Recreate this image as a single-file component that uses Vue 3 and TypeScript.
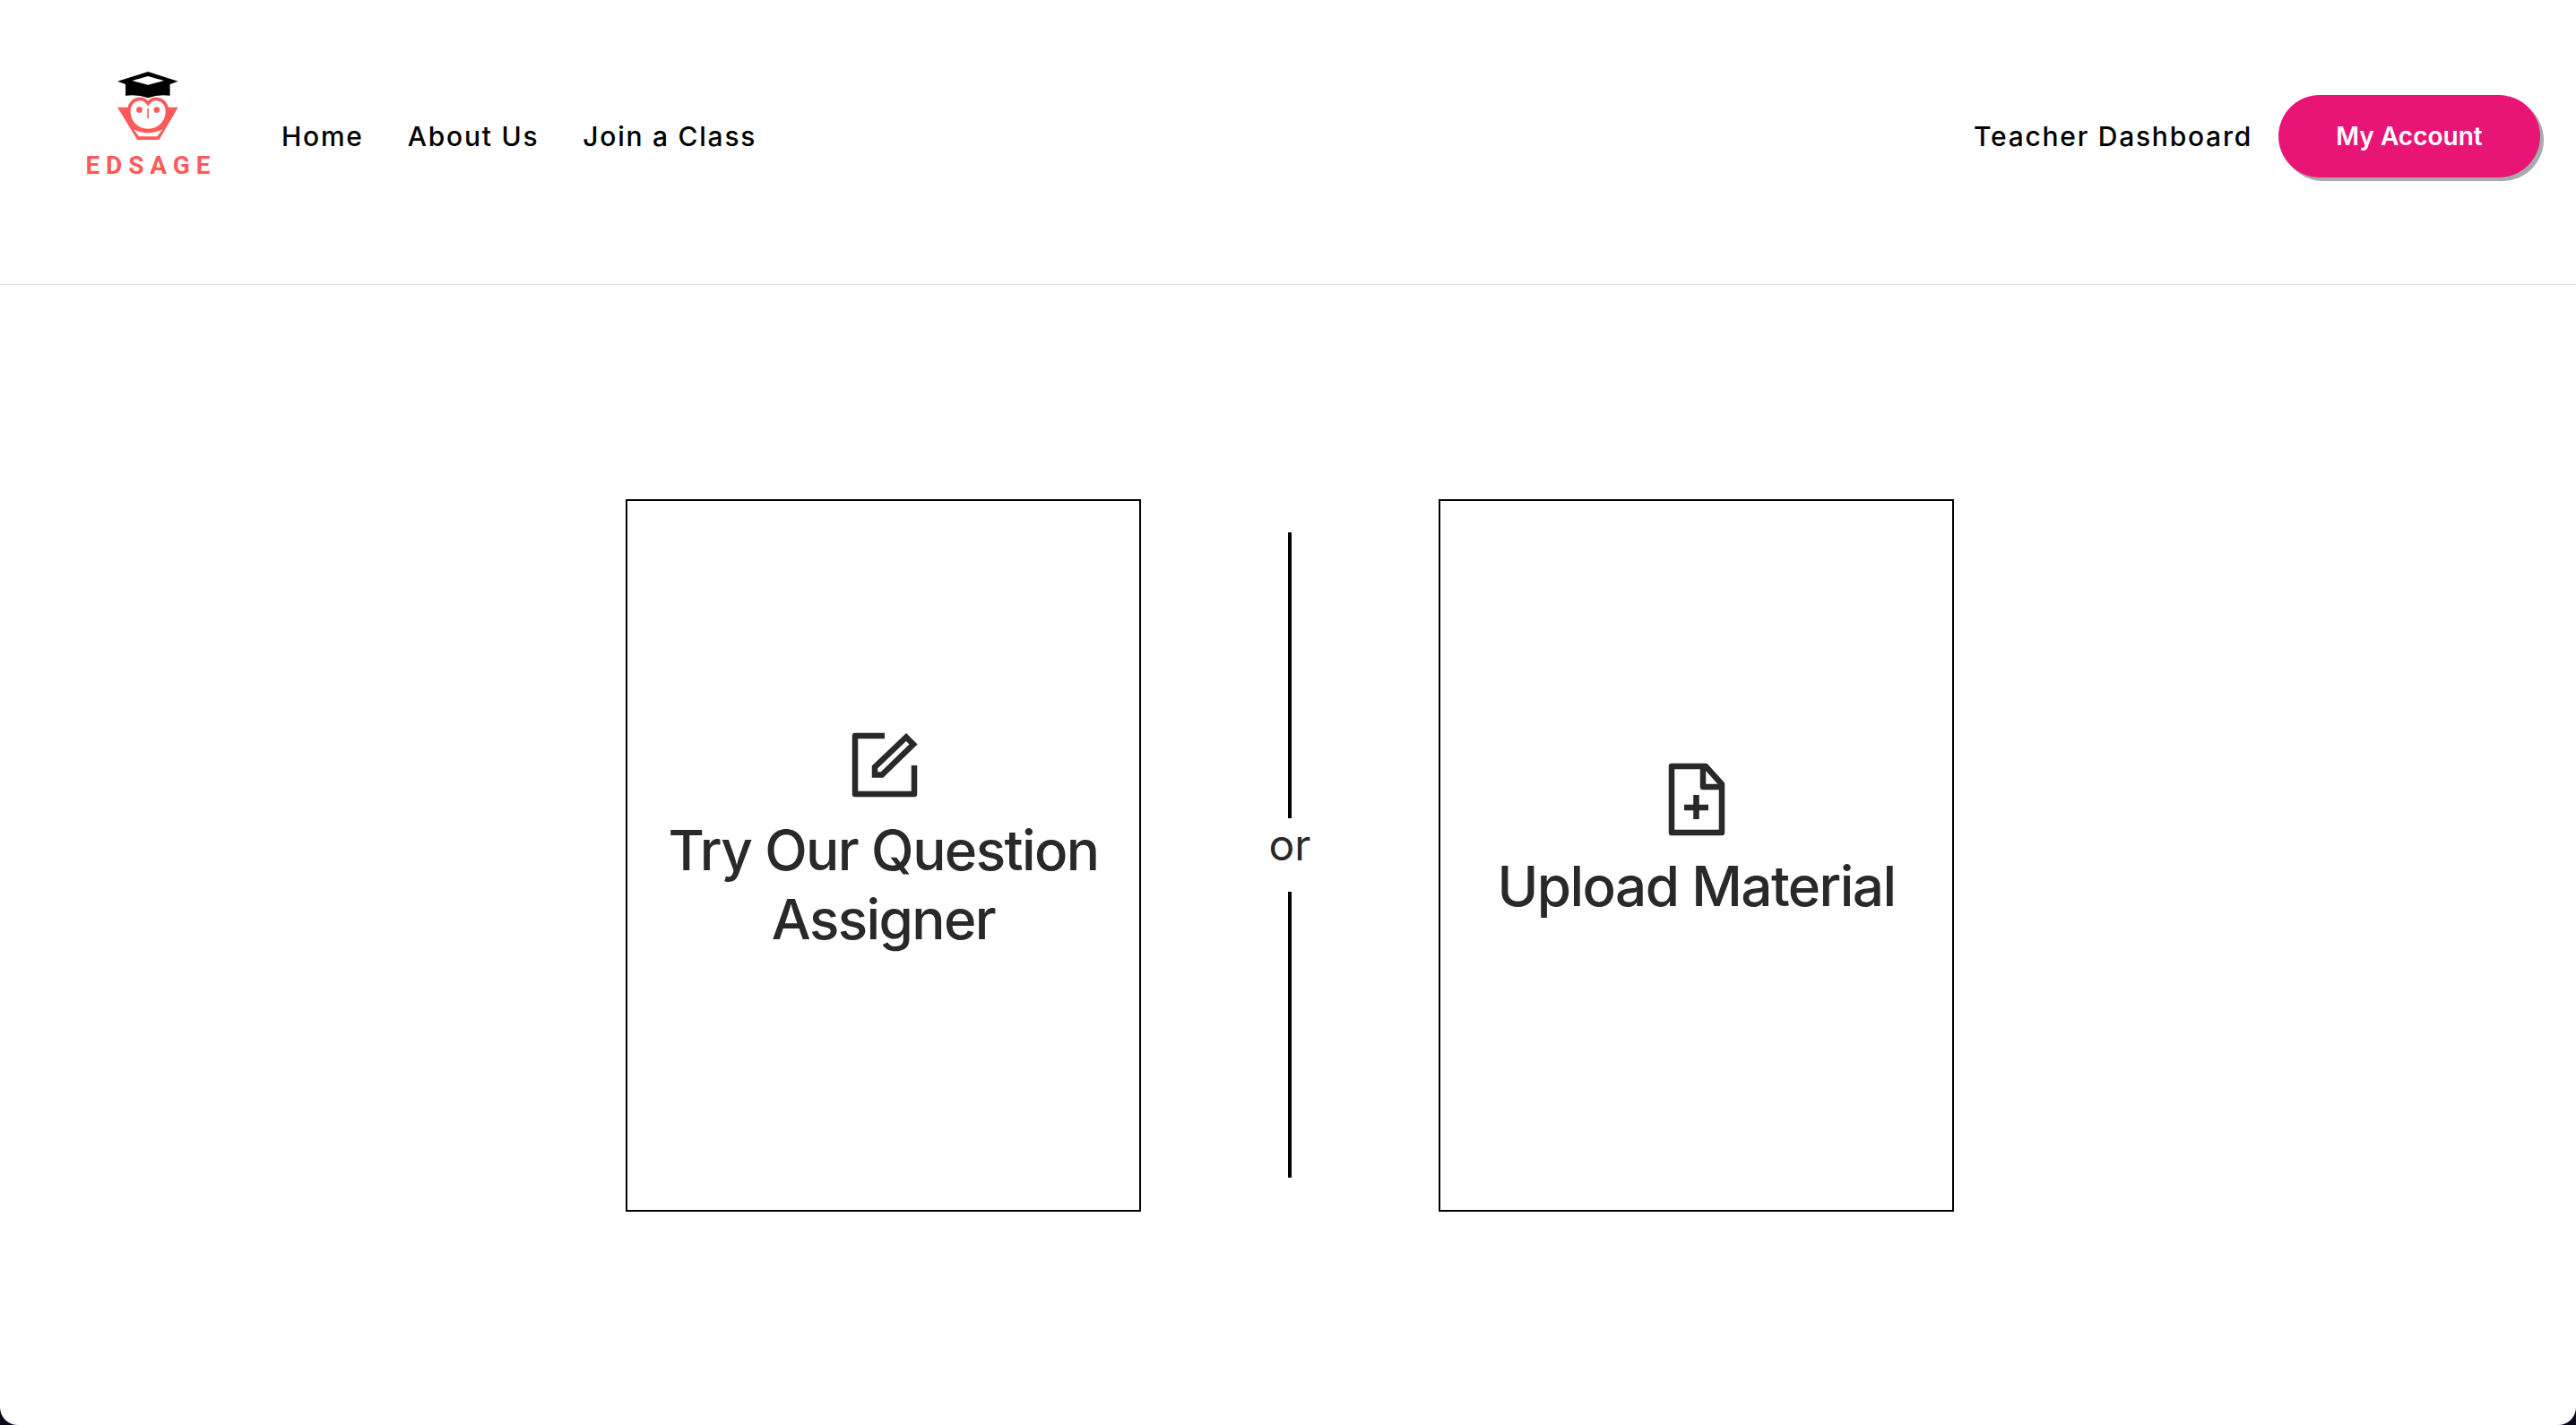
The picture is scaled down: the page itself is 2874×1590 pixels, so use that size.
<template>
  <div class="page">
    <header class="top-bar">
      <div class="brand">
        <svg class="brand-mark" viewBox="213 66 203 230" width="68" height="77">
          <path d="M213 98 315 66 415 98 388 108V146Q350 141 315 153 280 141 240 146V108Z" fill="#000" />
          <path d="M262 96 315 81 368 96 315 110Z" fill="#fff" />
          <path d="M213 185H415L352 293H279Z" fill="#fe5a5a" />
          <path d="M266 258Q315 282 364 258L345 282H285Z" fill="#fff" />
          <path d="M315 172C300 150 262 150 252 188 246 235 280 262 315 262 350 262 384 235 378 188 368 150 330 150 315 172Z" fill="#fff" stroke="#fe5a5a" stroke-width="11" />
          <circle cx="286" cy="193" r="10" fill="#fe5a5a" />
          <circle cx="344" cy="193" r="10" fill="#fe5a5a" />
          <path d="M315 188V222" stroke="#fe5a5a" stroke-width="5" fill="none" />
        </svg>
        <span class="brand-name">EDSAGE</span>
      </div>
      <nav class="nav-links">
        <a class="nav-link">Home</a>
        <a class="nav-link">About Us</a>
        <a class="nav-link">Join a Class</a>
      </nav>
      <div class="nav-right">
        <a class="nav-link">Teacher Dashboard</a>
        <button class="account-btn">My Account</button>
      </div>
    </header>

    <main class="choice-row">
      <div class="choice-card">
        <svg class="card-icon" width="90" height="92" viewBox="0 1 90 92" fill="none">
          <path d="M46 10H13V75H79V43" stroke="#292929" stroke-width="6.5" stroke-linejoin="round" />
          <path d="M70 11.5 78 19.5 43 53.5H35V45Z" stroke="#292929" stroke-width="6.5" />
        </svg>
        <p class="card-title">Try Our Question Assigner</p>
      </div>

      <div class="divider">
        <span class="divider-line"></span>
        <span class="divider-text">or</span>
        <span class="divider-line"></span>
      </div>

      <div class="choice-card">
        <svg class="card-icon" width="72" height="95" viewBox="0 1 72 95" fill="none">
          <path d="M8 7H46L64 27V81H8Z" stroke="#292929" stroke-width="6.5" stroke-linejoin="round" />
          <path d="M43 7V30H64" stroke="#292929" stroke-width="6.5" stroke-linejoin="round" />
          <path d="M22 53H49M35.5 39V66" stroke="#292929" stroke-width="6.5" />
        </svg>
        <p class="card-title">Upload Material</p>
      </div>
    </main>
  </div>
</template>

<script setup lang="ts">
</script>

<style>
html,
body {
  background: #0a0a1e;
}
</style>

<style scoped>
.page {
  height: 100vh;
  background: #fff;
  border-radius: 0 0 20px 20px;
  overflow: hidden;
  font-family: Inter, "Liberation Sans", sans-serif;
}

.top-bar {
  display: flex;
  align-items: center;
  height: 303px;
  padding: 0 40px 14px 95px;
  border-bottom: 1px solid #dcdcdc;
}

.brand {
  display: flex;
  flex-direction: column;
  align-items: center;
  gap: 16px;
  width: 140px;
  margin-top: -26px;
}

.brand-mark {
  display: block;
}

.brand-name {
  font-family: Roboto, sans-serif;
  font-size: 28px;
  line-height: 24px;
  font-weight: 700;
  letter-spacing: 6.9px;
  margin-right: -6.9px;
  color: #fe5a5a;
}

.nav-links {
  display: flex;
  gap: 49px;
  margin-left: 79px;
}

.nav-right {
  display: flex;
  align-items: center;
  gap: 29px;
  margin-left: auto;
}

.nav-link {
  font-size: 30px;
  font-weight: 500;
  letter-spacing: 1.75px;
  color: #000;
}

.account-btn {
  width: 292px;
  height: 92px;
  border: none;
  border-radius: 46px;
  background: #e91576;
  box-shadow: 4px 4px 0 #aaa;
  color: #fff;
  font-family: inherit;
  font-size: 28px;
  font-weight: 600;
}

.choice-row {
  display: flex;
  justify-content: center;
  padding: 239px 0 0 4px;
}

.choice-card {
  display: flex;
  flex-direction: column;
  align-items: center;
  justify-content: center;
  box-sizing: border-box;
  width: 575px;
  height: 795px;
  padding: 0 20px 34px;
  border: 2px solid #000;
}

.card-icon {
  display: block;
  margin-bottom: 6px;
}

.card-title {
  margin: 0;
  font-size: 62px;
  font-weight: 500;
  letter-spacing: -1.6px;
  line-height: 77px;
  text-align: center;
  color: #292929;
}

.divider {
  display: flex;
  flex-direction: column;
  align-items: center;
  box-sizing: border-box;
  width: 332px;
  height: 795px;
  padding: 37px 0 38px;
}

.divider-line {
  flex: 1;
  width: 4px;
  background: #000;
}

.divider-text {
  padding-bottom: 22px;
  font-size: 48px;
  line-height: 60px;
  color: #292929;
}
</style>
